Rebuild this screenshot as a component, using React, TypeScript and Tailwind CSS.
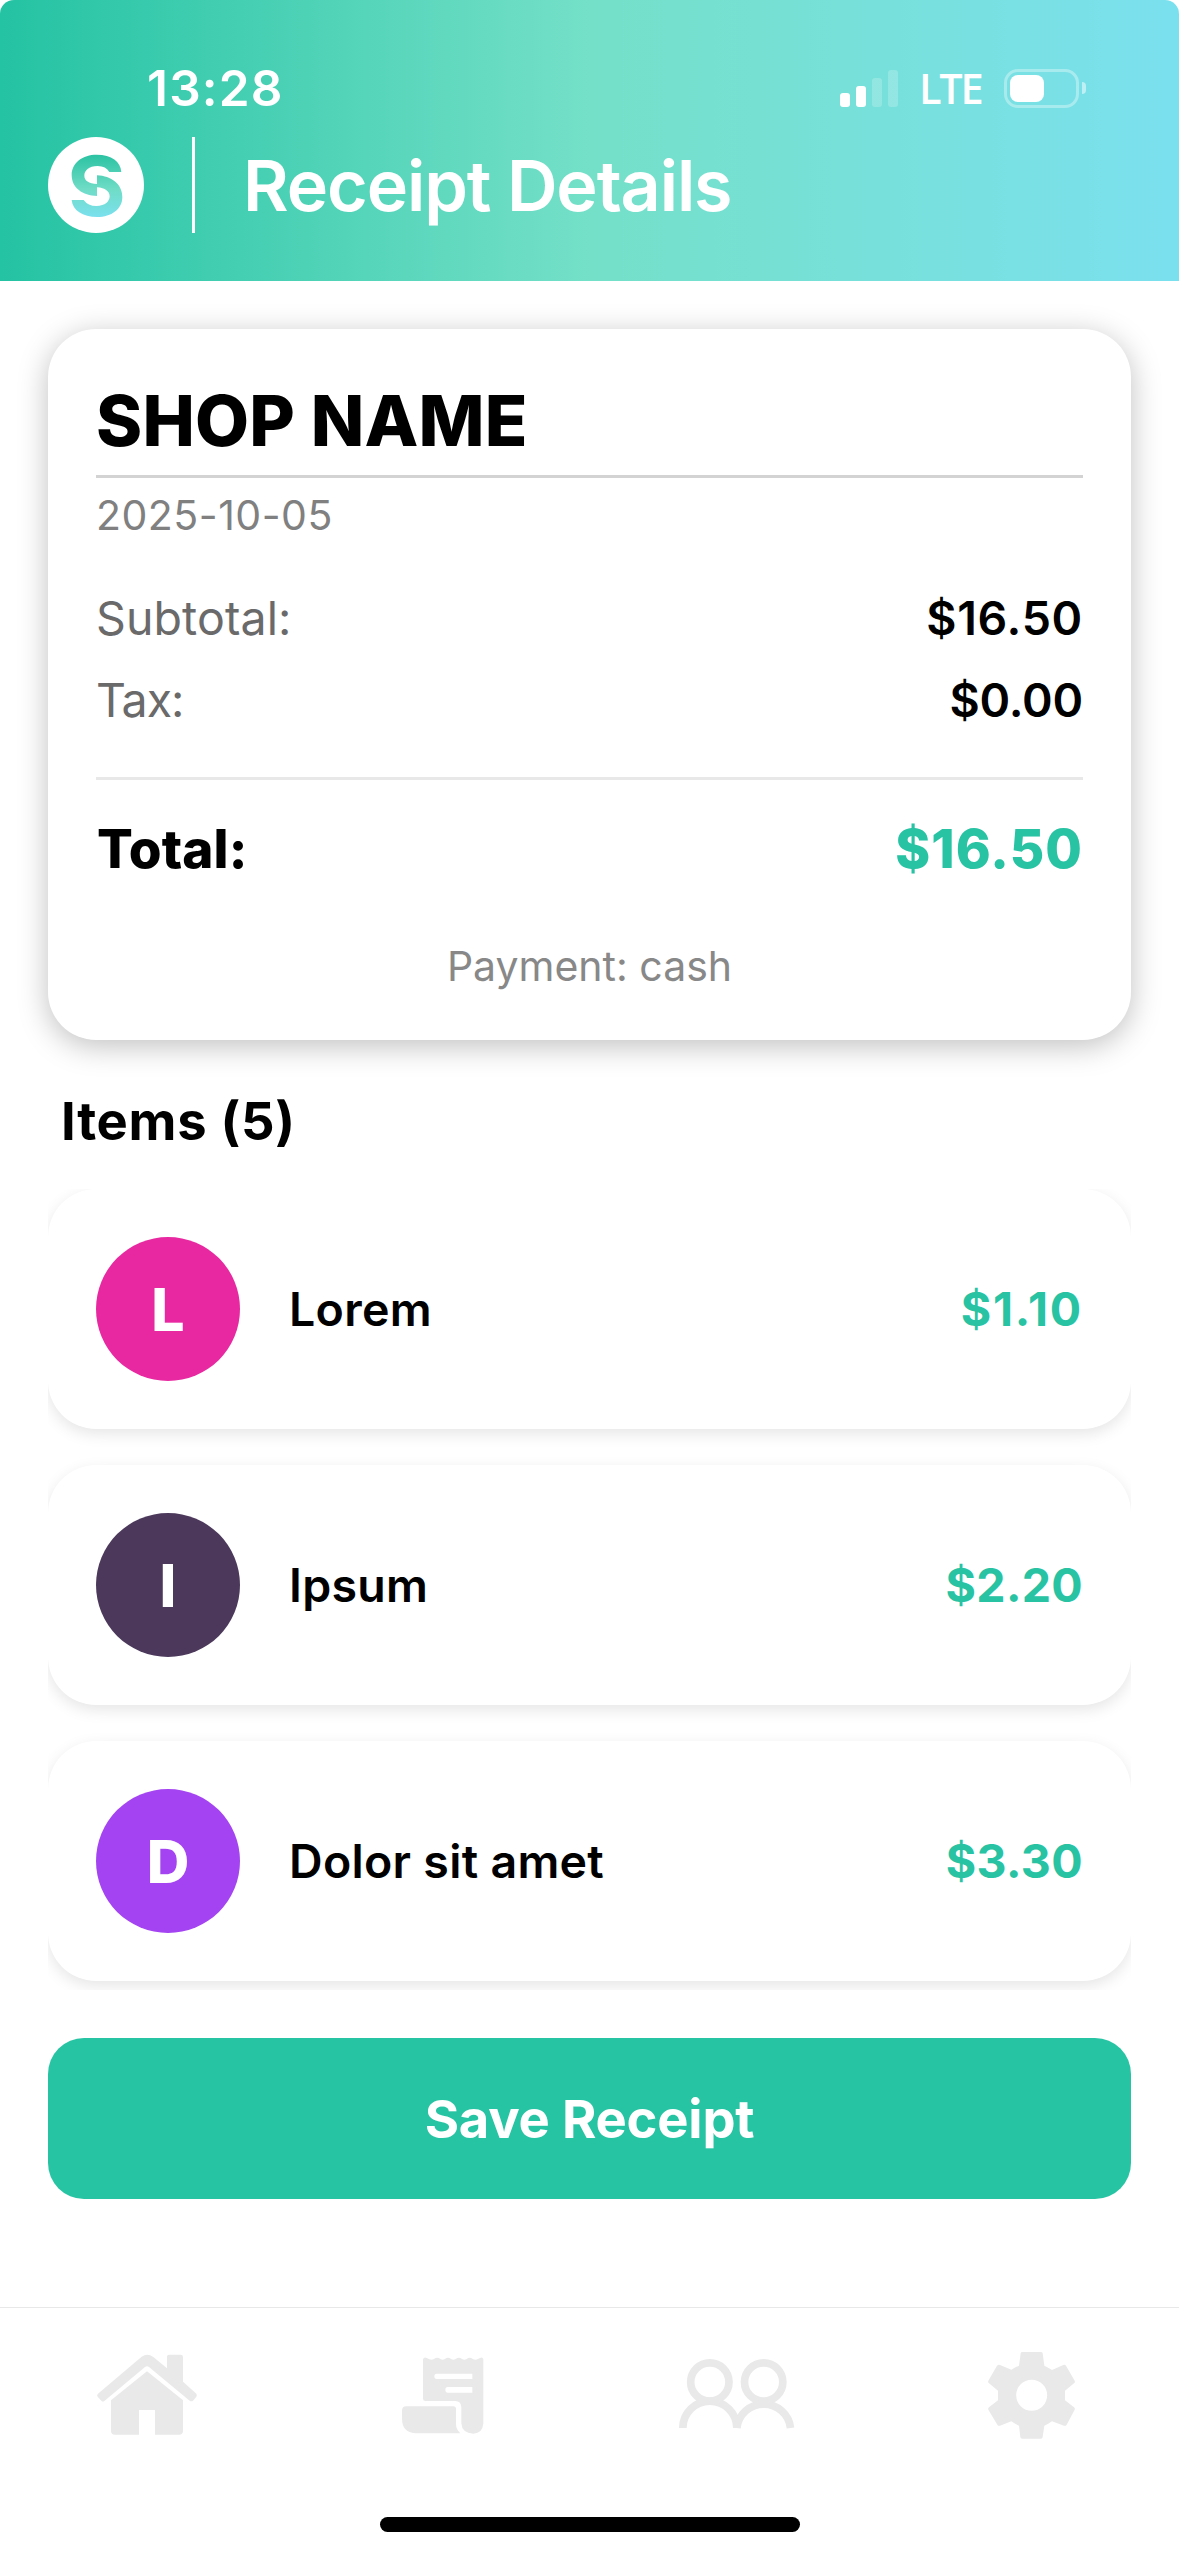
interface Item {
  name: string;
  price: string;
  color: string;
  priceClass: string;
}

const items: Item[] = [
  { name: "Lorem", price: "$1.10", color: "bg-[#e828a0]", priceClass: "tracking-[1.8px]" },
  { name: "Ipsum", price: "$2.20", color: "bg-[#4b385b]", priceClass: "tracking-[0.3px]" },
  { name: "Dolor sit amet", price: "$3.30", color: "bg-[#a343f1]", priceClass: "tracking-[0.4px]" },
];

function Logo() {
  return (
    <svg viewBox="54 51 288 288" className="size-24">
      <defs>
        <linearGradient id="logo" x1="0" y1="104" x2="0" y2="292" gradientUnits="userSpaceOnUse">
          <stop offset="0" stopColor="#2bc2a2" />
          <stop offset="0.55" stopColor="#6fdcc6" />
          <stop offset="1" stopColor="#7be0ee" />
        </linearGradient>
      </defs>
      <circle cx="198" cy="195" r="144" fill="#fff" />
      <g fill="url(#logo)">
        <path d="M274 156H238Q228 138 203 138C176 138 163 152 163 167C163 182 176 190 201 192V228C158 226 125 204 125 165C125 128 158 104 200 104C245 104 272 125 274 156Z" />
        <path d="M125 240H161Q174 258 199 258C226 258 239 244 239 229C239 214 226 204 201 202V166C244 168 277 192 277 231C277 268 244 291 202 291C157 291 128 271 125 240Z" />
      </g>
    </svg>
  );
}

function StatusBar() {
  return (
    <div className="flex h-[137px] items-start pt-[58px] text-white">
      <span className="ml-[147px] text-[49.5px] leading-[60px] font-semibold tracking-[1.2px]">13:28</span>
      <div className="mt-[10px] mr-[93px] ml-auto flex items-center">
        <div className="flex items-end gap-[6px]">
          <div className="h-[14px] w-[10px] rounded-[3px] bg-white" />
          <div className="h-[21px] w-[10px] rounded-[3px] bg-white" />
          <div className="h-[29px] w-[10px] rounded-[3px] bg-white/20" />
          <div className="h-[37px] w-[10px] rounded-[3px] bg-white/20" />
        </div>
        <div className="ml-[21px] w-[64px] pt-px font-['Open_Sans',sans-serif] text-[41.5px] leading-[39px] font-semibold tracking-[-2.2px]">
          LTE
        </div>
        <div className="ml-[21px] h-[39px] w-[75px] rounded-[14px] border-3 border-white/35 p-[3px]">
          <div className="h-[27px] w-[34px] rounded-[8px] bg-white" />
        </div>
        <div className="ml-[3px] h-3 w-1 rounded-r-full bg-white/50" />
      </div>
    </div>
  );
}

function HomeIcon() {
  return (
    <svg viewBox="81 165 360 300" className="h-[100px] w-[120px]" fill="currentColor">
      <path d="M114 311L245 200Q262 188 279 200L321 235V200Q321 194 327 194H362Q369 194 369 201V275L409 311Q412 316 409 320L399 332Q394 336 389 332L267 231Q261 226 255 231L133 333Q128 337 124 332L113 320Q109 315 114 311Z" />
      <path d="M261 244L369 331V422Q369 434 357 434H285V360H237V434H165Q153 434 153 422V331Z" />
    </svg>
  );
}

function ReceiptIcon() {
  return (
    <svg viewBox="966 165 360 300" className="h-[100px] w-[120px]" fill="currentColor">
      <path
        fillRule="evenodd"
        d="M1089 208Q1092 200 1100 204L1108 208Q1115 211 1122 207Q1132 199 1141 207Q1148 211 1155 207Q1164 199 1173 207Q1180 211 1187 207Q1197 199 1206 207Q1213 211 1220 207Q1229 199 1238 207Q1246 211 1252 208L1260 204Q1268 200 1270 208V400Q1268 430 1240 431Q1206 430 1204 400V352Q1203 333 1186 333H1096Q1089 333 1089 326ZM1130 251Q1123 251 1123 259Q1123 267 1130 267H1237V251ZM1163 291Q1156 291 1156 299.500Q1156 308 1163 308H1237V291Z"
      />
      <path d="M1039 349H1180Q1188 349 1188 357V402Q1188 418 1201 430H1066Q1026 428 1026 385V362Q1026 349 1039 349Z" />
    </svg>
  );
}

function PeopleIcon() {
  return (
    <svg viewBox="111 165 360 300" className="h-[100px] w-[120px]" fill="none" stroke="currentColor" strokeWidth="23">
      <circle cx="209.500" cy="276" r="57.500" />
      <circle cx="371" cy="276" r="57.500" />
      <path d="M128.500 414A81 80.500 0 0 1 290.500 414" />
      <path d="M290.500 414A81 80.500 0 0 1 451.500 414" />
    </svg>
  );
}

function GearIcon() {
  return (
    <svg viewBox="996 165 360 300" className="h-[100px] w-[120px]" fill="currentColor">
      <path
        fillRule="evenodd"
        d="M1147 186H1203Q1208 186 1208 190L1213 227Q1225 232 1236 240L1270 225Q1275 223 1278 227L1304 272Q1306 277 1302 280L1275 302V331L1302 352Q1306 355 1304 359L1280 404Q1277 409 1272 407L1236 394Q1225 402 1213 407L1208 441Q1207 446 1203 446H1147Q1141 446 1141 441L1137 407Q1125 402 1114 394L1080 407Q1075 409 1072 404L1045 359Q1043 355 1047 352L1074 331V302L1047 280Q1043 277 1045 272L1071 227Q1075 223 1080 225L1114 239Q1125 232 1137 227L1142 190Q1142 186 1147 186ZM1175 269.500A46.500 46.500 0 1 0 1175 362.500A46.500 46.500 0 1 0 1175 269.500Z"
      />
    </svg>
  );
}

export default function App() {
  return (
    <div className="flex h-[2556px] w-[1179px] flex-col bg-white font-['Inter',sans-serif] text-black">
      <header className="h-[281px] rounded-t-[14px] bg-linear-to-r/srgb from-[#24c3a3] via-[#74e0c8] to-[#7be0ee]">
        <StatusBar />
        <div className="flex items-start pl-12">
          <Logo />
          <div className="ml-12 h-24 w-[3px] bg-white" />
          <h1 className="ml-12 text-[70px] leading-[98px] font-semibold tracking-[-1.1px] text-white">
            Receipt Details
          </h1>
        </div>
      </header>

      <main className="flex flex-col px-12 pt-12">
        <section className="h-[711px] rounded-[48px] bg-white px-12 pt-12 shadow-[0_6px_30px_rgba(0,0,0,0.25)]">
          <h2 className="text-[70px] leading-[87px] font-extrabold tracking-[0.2px]">SHOP NAME</h2>
          <div className="mt-[11px] h-[3px] bg-[#d3d3d3]" />
          <p className="mt-3 text-[41px] leading-[50px] tracking-[0.5px] text-[#808080]">2025-10-05</p>
          <div className="mt-[49px] flex justify-between text-[46.5px] leading-[58px]">
            <span className="tracking-[0.1px] text-[#6a6a6a]">Subtotal:</span>
            <span className="font-semibold tracking-[0.7px]">$16.50</span>
          </div>
          <div className="mt-6 flex justify-between text-[46.5px] leading-[58px]">
            <span className="tracking-[-1px] text-[#6a6a6a]">Tax:</span>
            <span className="font-semibold tracking-[-0.2px]">$0.00</span>
          </div>
          <div className="mt-12 h-[3px] bg-[#e8e8e8]" />
          <div className="mt-[37px] flex justify-between text-[53px] leading-[64px] font-extrabold">
            <span className="ml-px tracking-[0.1px]">Total:</span>
            <span className="tracking-[1px] text-[#27c3a3]">$16.50</span>
          </div>
          <p className="mt-[60px] text-center text-[41px] leading-[50px] text-[#888]">Payment: cash</p>
        </section>

        <h3 className="mt-[49px] ml-[13px] text-[52.5px] leading-[64px] font-bold tracking-[0.7px]">Items (5)</h3>

        <div className="mt-9 flex h-[801px] flex-col gap-9 overflow-hidden">
          {items.map((item) => (
            <div
              key={item.name}
              className="flex h-60 shrink-0 items-center rounded-[48px] bg-white px-12 shadow-[0_5px_15px_rgba(0,0,0,0.1)]"
            >
              <div
                className={`flex size-36 items-center justify-center rounded-full pt-0.5 text-[59px] font-extrabold text-white ${item.color}`}
              >
                {item.name[0]}
              </div>
              <span className="ml-[49px] pt-0.5 text-[46.5px] font-semibold tracking-[0.3px]">{item.name}</span>
              <span className={`ml-auto pt-0.5 text-[46.5px] font-bold text-[#27c3a3] ${item.priceClass}`}>
                {item.price}
              </span>
            </div>
          ))}
        </div>

        <button className="mt-12 h-[161px] rounded-[36px] bg-[#27c4a4] pt-0.5 text-[52.5px] font-bold tracking-[-0.2px] text-white">
          Save Receipt
        </button>
      </main>

      <nav className="mt-[108px] grid grid-cols-4 justify-items-center border-t border-[#e8e8e8] pt-[37px] text-[#e9e9e9]">
        <HomeIcon />
        <ReceiptIcon />
        <PeopleIcon />
        <GearIcon />
      </nav>
      <div className="mx-auto mt-[72px] h-[15px] w-[420px] rounded-full bg-black" />
    </div>
  );
}
